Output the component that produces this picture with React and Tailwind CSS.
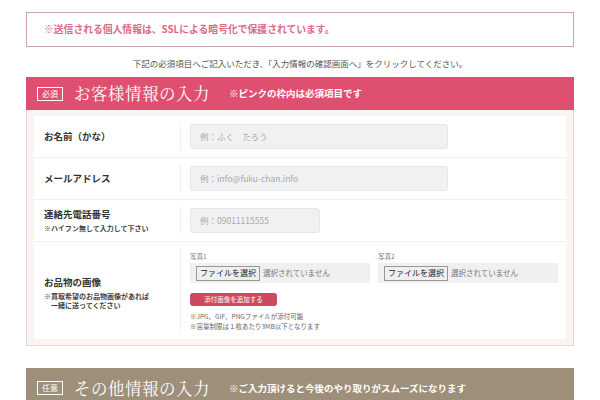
export default function App() {
  const jp = { fontFamily: '"Noto Sans CJK JP", "Noto Sans", sans-serif' };
  const serif = { fontFamily: '"Noto Serif CJK JP", "Liberation Serif", "Noto Sans CJK JP", serif' };
  return (
    <div className="w-[600px] h-[400px] overflow-hidden bg-white" style={jp}>
      <div className="mx-[26px] pt-[12px]">
        <div className="h-[35px] border border-[#c9a6b4] flex items-center pl-[17px]">
          <span className="text-[9.8px] font-bold text-[#db6a88]">※送信される個人情報は、SSLによる暗号化で保護されています。</span>
        </div>
        <div className="h-[30px] flex items-center justify-center text-[8.5px] text-[#555] pt-[2px]">
          下記の必須項目へご記入いただき、「入力情報の確認画面へ」をクリックしてください。
        </div>
        <div className="h-[33px] bg-[#df4f70] flex items-center pl-[11px]">
          <span className="border border-white text-white text-[8px] leading-none px-[4px] py-[2px]">必須</span>
          <span className="text-white text-[16.5px] ml-[11px] tracking-[0.5px]" style={serif}>お客様情報の入力</span>
          <span className="text-white text-[9.5px] font-bold ml-[19px]">※ピンクの枠内は必須項目です</span>
        </div>
        <div className="border border-[#ecd6d6] border-t-0 bg-[#f9f5f3] px-[7px] pt-[6px] pb-[6px]">
          <div className="bg-white">
            <Row h="h-[42px]" label={<span className="text-[9.5px] font-bold text-[#333]">お名前（かな）</span>}>
              <Input w="w-[258px]" ph="例：ふく　たろう" />
            </Row>
            <Row h="h-[42px]" label={<span className="text-[9.5px] font-bold text-[#333]">メールアドレス</span>}>
              <Input w="w-[258px]" ph="例：info@fuku-chan.info" />
            </Row>
            <Row h="h-[42px]" label={
              <div className="flex flex-col">
                <span className="text-[9.5px] font-bold text-[#333]">連絡先電話番号</span>
                <span className="text-[7px] font-bold text-[#444] mt-[2px]">※ハイフン無して入力して下さい</span>
              </div>
            }>
              <Input w="w-[130px]" ph="例：09011115555" />
            </Row>
            <div className="flex h-[97px]">
              <div className="w-[146px] pl-[10px] flex flex-col justify-center pt-[4px]">
                <span className="text-[9.5px] font-bold text-[#333]">お品物の画像</span>
                <span className="text-[7px] font-bold text-[#444] mt-[3px] leading-[9px]">※買取希望のお品物画像があれば<br />　一緒に送ってください</span>
              </div>
              <div className="w-px bg-[#eee] my-[6px]" />
              <div className="flex-1 pl-[9px] pt-[10px]">
                <div className="flex gap-[8px]">
                  <FileBox label="写真1" />
                  <FileBox label="写真2" />
                </div>
                <div className="mt-[10px] w-[87px] h-[13px] rounded-[3px] bg-[#cc4a5e] text-white text-[6.5px] flex items-center justify-center">添付画像を追加する</div>
                <div className="mt-[5px] text-[6.5px] text-[#666] leading-[10px]">
                  ※JPG、GIF、PNGファイルが添付可能<br />※容量制限は１枚あたり3MB以下となります
                </div>
              </div>
            </div>
          </div>
        </div>
        <div className="mt-[22px] h-[40px] bg-[#9d8f79] flex items-start pt-[8px] pl-[11px]">
          <span className="border border-white text-white text-[8px] leading-none px-[4px] py-[2px] mt-[5px]">任意</span>
          <span className="text-white text-[16.5px] ml-[11px] tracking-[0.5px]" style={serif}>その他情報の入力</span>
          <span className="text-white text-[9.5px] font-bold ml-[19px] mt-[5px]">※ご入力頂けると今後のやり取りがスムーズになります</span>
        </div>
      </div>
    </div>
  );
}

function Row({ h, label, children }) {
  return (
    <div className={`flex ${h} border-b border-[#f3efee]`}>
      <div className="w-[146px] pl-[10px] flex items-center">{label}</div>
      <div className="w-px bg-[#eee] my-[7px]" />
      <div className="flex-1 pl-[9px] flex items-center">{children}</div>
    </div>
  );
}

function Input({ w, ph }) {
  return (
    <div className={`${w} h-[25px] rounded-[3px] bg-[#f1f1f1] border border-[#e6e6e6] flex items-center pl-[9px] text-[8.5px] text-[#aaa]`}>{ph}</div>
  );
}

function FileBox({ label }) {
  return (
    <div className="w-[180px]">
      <div className="text-[6.5px] text-[#777] h-[9px] leading-[9px]">{label}</div>
      <div className="mt-[2px] h-[20px] bg-[#f0f0f0] flex items-center pl-[6px]">
        <span className="border border-[#999] bg-[#efefef] text-[8px] text-[#222] px-[3px] h-[15px] flex items-center">ファイルを選択</span>
        <span className="ml-[3px] text-[7.5px] text-[#777]">選択されていません</span>
      </div>
    </div>
  );
}
